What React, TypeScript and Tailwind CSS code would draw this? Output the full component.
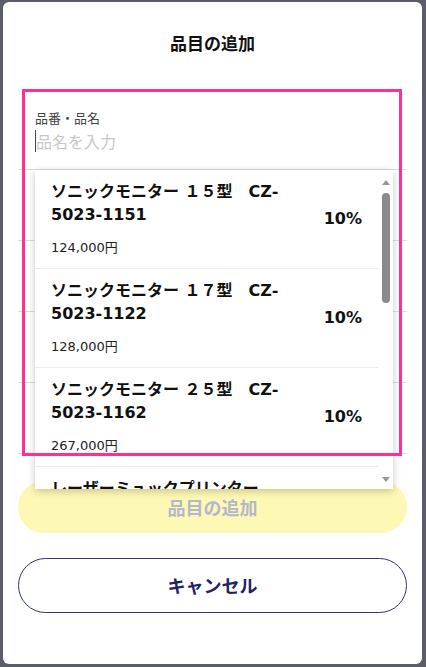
import React from "react";

const items = [
  { l1: "ソニックモニター １５型　CZ-", l2: "5023-1151", price: "124,000円" },
  { l1: "ソニックモニター １７型　CZ-", l2: "5023-1122", price: "128,000円" },
  { l1: "ソニックモニター ２５型　CZ-", l2: "5023-1162", price: "267,000円" },
  { l1: "レーザーミュックプリンター", l2: "LP-2200", price: "98,000円" },
];

export default function App() {
  return (
    <div
      className="relative w-[426px] h-[667px] overflow-hidden bg-[#5b5e69] pt-[2px] pl-[3px] pr-[4px] pb-[3px]"
      style={{ fontFamily: '"Noto Sans CJK JP", "Noto Sans", sans-serif' }}
    >
      <div className="relative h-[662px] bg-white rounded-[6px] px-[15px] flex flex-col">
        <div className="mt-[29px] h-[24px] leading-[24px] text-center text-[17px] font-bold text-[#111]">
          品目の追加
        </div>

        <div className="mt-[54px] h-[61px] border-b border-[#ddd] pl-[17px]">
          <div className="h-[18px] leading-[18px] text-[13px] text-[#444]">品番・品名</div>
          <div className="mt-[2px] h-[24px] flex items-center">
            <span className="w-[1px] h-[22px] bg-[#444]" />
            <span className="leading-[24px] text-[16px] text-[#c8c8c8]">品名を入力</span>
          </div>
        </div>

        <div className="h-[71px] border-b border-[#ddd]" />
        <div className="h-[71px] border-b border-[#ddd]" />
        <div className="h-[71px] border-b border-[#ddd]" />
        <div className="h-[71px] border-b border-[#ddd]" />

        <div className="mt-[27px] h-[52px] rounded-full bg-[#fdf8b3] flex items-center justify-center text-[18px] font-bold text-[#b4b7cf]">
          品目の追加
        </div>
        <div className="mt-[25px] h-[55px] rounded-full border border-[#2e3177] flex items-center justify-center text-[18px] font-bold text-[#1f2366]">
          キャンセル
        </div>

        <div
          className="absolute left-[32px] top-[168px] w-[358px] h-[319px] bg-white shadow-[0_2px_8px_rgba(0,0,0,0.22)] flex overflow-hidden"
          style={{ fontFamily: '"DejaVu Sans", "Noto Sans CJK JP", sans-serif' }}
        >
          <div className="flex-1 overflow-hidden">
            {items.map((it, i) => (
              <div
                key={i}
                className="h-[99px] border-b border-[#ececec] pl-[16px] pr-[16px] flex"
              >
                <div className="flex-1">
                  <div className="pt-[10px] text-[16px] leading-[23px] font-bold text-[#111]">
                    {it.l1}
                    <br />
                    {it.l2}
                  </div>
                  <div className="mt-[12px] text-[13px] leading-[20px] text-[#222]">{it.price}</div>
                </div>
                <div className="flex items-center pb-[1px] text-[16px] font-bold text-[#111]">10%</div>
              </div>
            ))}
          </div>
          <div className="w-[15px] flex flex-col items-center bg-white">
            <div className="mt-[10px] w-0 h-0 border-l-[4px] border-r-[4px] border-b-[5px] border-l-transparent border-r-transparent border-b-[#999]" />
            <div className="mt-[8px] w-[8px] h-[110px] rounded-full bg-[#8a8a8a]" />
            <div className="mt-auto mb-[7px] w-0 h-0 border-l-[4px] border-r-[4px] border-t-[5px] border-l-transparent border-r-transparent border-t-[#999]" />
          </div>
        </div>
      </div>

      <div className="pointer-events-none absolute left-[22px] top-[89px] w-[380px] h-[367px] border-[3px] border-[#ff2f96]" />
    </div>
  );
}
